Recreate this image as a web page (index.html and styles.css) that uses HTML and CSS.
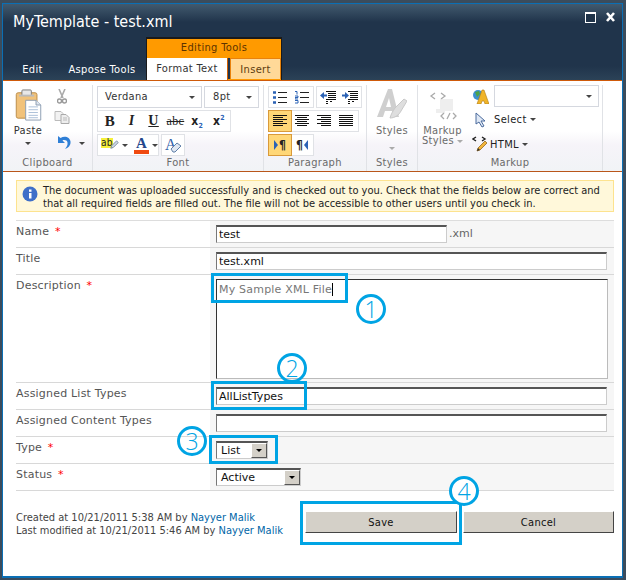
FILE: index.html
```html
<!DOCTYPE html>
<html lang="en">
<head>
    <meta charset="UTF-8">
    <meta name="viewport" content="width=device-width, initial-scale=1.0">
    <title>MyTemplate - test.xml</title>
    <link rel="stylesheet" href="styles.css">
</head>
<body>
    <div class="window">
        <div class="window-inner">
            <div class="titlebar">
                <div class="title-row">
                    <div class="title">MyTemplate - test.xml</div>
                    <div class="win-buttons">
                        <svg width="11" height="11" viewBox="0 0 11 11"><rect x="0.5" y="0.5" width="10" height="10" fill="#1f3349" stroke="#fff"/><rect x="0" y="0" width="11" height="2" fill="#fff"/></svg>
                        <svg width="9" height="10" viewBox="0 0 9 10"><path d="M1 1l7 8M8 1L1 9" stroke="#fff" stroke-width="2.600"/></svg>
                    </div>
                </div>
                <div class="tab-row">
                    <div class="tab tab-edit">Edit</div>
                    <div class="tab tab-aspose">Aspose Tools</div>
                    <div class="tab-group">
                        <div class="tab-group-name">Editing Tools</div>
                        <div class="tab-group-tabs">
                            <div class="tab tab-active">Format Text</div>
                            <div class="tab tab-insert">Insert</div>
                        </div>
                    </div>
                </div>
            </div>

            <div class="ribbon">
                <div class="group group-clipboard">
                    <div class="group-body clipboard-body">
                        <div class="big-btn paste-btn">
                            <svg width="27" height="32" viewBox="0 0 28 34">
                                <rect x="1" y="4" width="22" height="27" rx="2" fill="#f1c27a" stroke="#b98a45"/>
                                <rect x="7" y="1" width="10" height="6" rx="1" fill="#e8e8e8" stroke="#777"/>
                                <rect x="4" y="6" width="16" height="2" fill="#bbb"/>
                                <path d="M11 12h11l5 5v16H11z" fill="#fff" stroke="#8a9bb0"/>
                                <path d="M22 12v5h5" fill="#dfe6ef" stroke="#8a9bb0"/>
                                <path d="M14 19h10M14 22h10M14 25h10M14 28h10M14 30.500h10" stroke="#a8bdd6"/>
                            </svg>
                            <span class="paste-label">Paste</span>
                            <span class="arrow"></span>
                        </div>
                        <div class="clip-small">
                            <svg class="cut-icon" width="10" height="15" viewBox="0 0 10 15"><path d="M2 0l4 9M8 0L4 9" stroke="#aaa" stroke-width="1.600" fill="none"/><circle cx="2.500" cy="12" r="2" fill="none" stroke="#999" stroke-width="1.400"/><circle cx="7.500" cy="12" r="2" fill="none" stroke="#999" stroke-width="1.400"/></svg>
                            <svg class="copy-icon" width="16" height="13" viewBox="0 0 16 13"><path d="M1 .5h6l2 2v7H1z" fill="#f2f2f2" stroke="#bbb"/><path d="M7 3.500h5l3 3v6H7z" fill="#eee" stroke="#aaa"/><path d="M9 7h4M9 9h4" stroke="#bbb"/></svg>
                            <div class="undo-line">
                                <svg width="14" height="14" viewBox="0 0 14 14"><path d="M1 1v7h7L5.500 5.500C7 4.500 10 5 10.500 7.500 11 10 9.500 12 8 14c3-1 6-3.500 5.500-7.500C13 2.500 8 0 3.500 3z" fill="#2f7fd6"/></svg>
                                <span class="arrow undo-arrow"></span>
                            </div>
                        </div>
                    </div>
                    <div class="group-label">Clipboard</div>
                </div>

                <div class="group group-font">
                    <div class="group-body font-body">
                        <div class="row">
                            <div class="combo combo-font">Verdana<span class="arrow"></span></div>
                            <div class="combo combo-size">8pt<span class="arrow"></span></div>
                        </div>
                        <div class="row">
                            <div class="btn-box box-format">
                                <span class="fmt fmt-bold">B</span>
                                <span class="fmt fmt-italic">I</span>
                                <span class="fmt fmt-under">U</span>
                                <span class="fmt fmt-strike">abc</span>
                                <span class="fmt fmt-script">x<sub>2</sub></span>
                                <span class="fmt fmt-script">x<sup>2</sup></span>
                            </div>
                        </div>
                        <div class="row">
                            <div class="btn-box box-color">
                                <span class="hl-icon">
                                    <span class="hl-text">ab</span>
                                    <svg width="11" height="12" viewBox="0 0 11 12"><path d="M1 10l1-3 6-6 2 2-6 6z" fill="#cfd8e6" stroke="#6a7c95"/></svg>
                                </span>
                                <span class="arrow"></span>
                                <span class="color-a">A</span>
                                <span class="arrow"></span>
                            </div>
                            <div class="btn-box box-clear">
                                <span class="clear-a">A</span>
                                <svg class="eraser" width="12" height="12" viewBox="0 0 12 12"><path d="M1 8l6-6 4 3-6 6H3z" fill="#dfe7f2" stroke="#5f7fa8"/></svg>
                            </div>
                        </div>
                    </div>
                    <div class="group-label">Font</div>
                </div>

                <div class="group group-para">
                    <div class="group-body font-body">
                        <div class="row">
                            <div class="btn-box box-para">
                                <span class="pbtn">
                                    <svg width="14" height="13" viewBox="0 0 14 13"><path d="M0 1.500h3M0 6.500h3M0 11.500h3" stroke="#2b62b5" stroke-width="2.400"/><path d="M5 1.500h9M5 6.500h9M5 11.500h9" stroke="#222"/></svg>
                                </span>
                                <span class="pbtn">
                                    <svg width="14" height="13" viewBox="0 0 14 13"><path d="M0 .5h2v3M0 5h3v1.500H0V8h3M0 9.500h3V12H0" stroke="#2b62b5" fill="none"/><path d="M5 1.500h9M5 6.500h9M5 11.500h9" stroke="#222"/></svg>
                                </span>
                            </div>
                            <div class="btn-box box-para">
                                <span class="pbtn">
                                    <svg width="16" height="13" viewBox="0 0 16 13"><path d="M6 .5h10M8 2.500h8M8 4.500h8M8 6.500h8M6 8.500h10" stroke="#111"/><path d="M6 10.500h2M10 10.500h2M6 12.500h2" stroke="#111"/><path d="M0 4.500l4-3.500v2.500h3v2H4V8z" fill="#2b62b5"/></svg>
                                </span>
                                <span class="pbtn">
                                    <svg width="16" height="13" viewBox="0 0 16 13"><path d="M6 .5h10M8 2.500h8M8 4.500h8M8 6.500h8M6 8.500h10" stroke="#111"/><path d="M6 10.500h2M10 10.500h2M6 12.500h2" stroke="#111"/><path d="M7 4.500L3 1v2.500H0v2h3V8z" fill="#2b62b5"/></svg>
                                </span>
                            </div>
                        </div>
                        <div class="row">
                            <div class="btn-box box-align">
                                <span class="pbtn pbtn-on"><svg width="14" height="12" viewBox="0 0 14 12"><path d="M0 .5h14M0 2.500h10M0 4.500h14M0 6.500h10M0 8.500h14M0 10.500h10" stroke="#111"/></svg></span>
                                <span class="pbtn"><svg width="14" height="12" viewBox="0 0 14 12"><path d="M0 .5h14M2 2.500h10M0 4.500h14M2 6.500h10M0 8.500h14M2 10.500h10" stroke="#111"/></svg></span>
                                <span class="pbtn"><svg width="14" height="12" viewBox="0 0 14 12"><path d="M0 .5h14M4 2.500h10M0 4.500h14M4 6.500h10M0 8.500h14M4 10.500h10" stroke="#111"/></svg></span>
                                <span class="pbtn"><svg width="14" height="12" viewBox="0 0 14 12"><path d="M0 .5h14M0 2.500h14M0 4.500h14M0 6.500h14M0 8.500h14M0 10.500h14" stroke="#111"/></svg></span>
                            </div>
                        </div>
                        <div class="row">
                            <div class="btn-box box-dir">
                                <span class="pbtn pbtn-on"><svg width="4" height="10" viewBox="0 0 4 10"><path d="M0 0l4 5-4 5z" fill="#2b62b5"/></svg><span class="pilcrow">¶</span></span>
                                <span class="pbtn"><span class="pilcrow">¶</span><svg width="4" height="10" viewBox="0 0 4 10"><path d="M4 0L0 5l4 5z" fill="#2b62b5"/></svg></span>
                            </div>
                        </div>
                    </div>
                    <div class="group-label">Paragraph</div>
                </div>

                <div class="group group-styles">
                    <div class="group-body big-body">
                        <div class="big-btn">
                            <svg width="30" height="32" viewBox="0 0 30 32">
                                <path d="M0 29h6l2-6h7l1 6h6L15 1h-4zM9 19l3-9 2 9z" fill="#cfcfcf"/>
                                <path d="M13 30c5 0 9-3 11-7l6-10-3-2-9 9c-2 3-4 6-5 10z" fill="#dedede" stroke="#c8c8c8"/>
                            </svg>
                            <span class="faded big-label">Styles</span>
                            <span class="arrow arrow-grey"></span>
                        </div>
                    </div>
                    <div class="group-label">Styles</div>
                </div>

                <div class="group group-markup">
                    <div class="group-body markup-body">
                        <div class="big-btn markup-btn">
                            <svg width="30" height="32" viewBox="0 0 30 32">
                                <path d="M7 4l-4 3 4 3M13 4l4 3-4 3" stroke="#aaa" fill="none" stroke-width="1.300"/>
                                <path d="M12 11h13M12 13h13M12 15h13M12 17h13M12 19h13M8 21h17M8 23h9" stroke="#ddd"/>
                                <path d="M16 24l-3 3 3 3M25 24l3 3-3 3M22 24l-3 6" stroke="#aaa" fill="none" stroke-width="1.300"/>
                            </svg>
                            <span class="faded markup-label">Markup<br>Styles<span class="arrow arrow-grey arrow-inline"></span></span>
                        </div>
                        <div class="markup-list">
                            <div class="markup-row">
                                <svg class="lang-icon" width="17" height="15" viewBox="0 0 17 15">
                                    <circle cx="6" cy="6" r="5" fill="#3c8fd0"/>
                                    <path d="M3 3l4-1 1 3-3 3z" fill="#4da34a"/>
                                    <path d="M10 1h2l5 14h-4l-1-3h-2l-1 3H5z" fill="#f0b429" stroke="#b07a10" stroke-width=".6"/>
                                </svg>
                                <div class="combo combo-lang"><span class="arrow"></span></div>
                            </div>
                            <div class="markup-row">
                                <svg class="select-icon" width="12" height="16" viewBox="0 0 12 16"><path d="M1 1v11l3-2 3 5 2-1-3-5h4z" fill="#dfe8f5" stroke="#4a6a9c"/></svg>
                                Select<span class="arrow arrow-inline"></span>
                            </div>
                            <div class="markup-row">
                                <svg class="html-icon" width="17" height="17" viewBox="0 0 17 17">
                                    <path d="M4 1L1 3l3 2M10 1l3 2-3 2" stroke="#222" fill="none" stroke-width="1.400"/>
                                    <path d="M5 15l1-3 7-7 2 2-7 7z" fill="#f2b53a" stroke="#8a5a10" stroke-width=".7"/>
                                    <path d="M5 15l1-3 2 2z" fill="#333"/>
                                </svg>
                                HTML<span class="arrow arrow-inline"></span>
                            </div>
                        </div>
                    </div>
                    <div class="group-label">Markup</div>
                </div>
            </div>

            <div class="content">
                <div class="message">
                    <svg width="16" height="16" viewBox="0 0 16 16">
                        <circle cx="8" cy="8" r="7.500" fill="#3f6fc8"/>
                        <rect x="7" y="7" width="2.500" height="5.500" fill="#fff"/>
                        <rect x="7" y="3.500" width="2.500" height="2.300" fill="#fff"/>
                    </svg>
                    <p>The document was uploaded successfully and is checked out to you. Check that the fields below are correct and that all required fields are filled out. The file will not be accessible to other users until you check in.</p>
                </div>

                <div class="form">
                    <div class="form-row">
                        <div class="form-label">Name <span class="req">*</span></div>
                        <div class="form-field">
                            <input class="text-input input-name" type="text" value="test" readonly>
                            <span class="suffix">.xml</span>
                        </div>
                    </div>
                    <div class="form-row">
                        <div class="form-label">Title</div>
                        <div class="form-field"><input class="text-input" type="text" value="test.xml" readonly></div>
                    </div>
                    <div class="form-row row-tall">
                        <div class="form-label">Description <span class="req">*</span></div>
                        <div class="form-field">
                            <div class="textarea">My Sample XML File<span class="caret"></span></div>
                        </div>
                    </div>
                    <div class="form-row">
                        <div class="form-label">Assigned List Types</div>
                        <div class="form-field"><input class="text-input" type="text" value="AllListTypes" readonly></div>
                    </div>
                    <div class="form-row">
                        <div class="form-label">Assigned Content Types</div>
                        <div class="form-field"><input class="text-input" type="text" readonly></div>
                    </div>
                    <div class="form-row">
                        <div class="form-label">Type <span class="req">*</span></div>
                        <div class="form-field">
                            <div class="select select-type">List<span class="select-btn"></span></div>
                        </div>
                    </div>
                    <div class="form-row">
                        <div class="form-label">Status <span class="req">*</span></div>
                        <div class="form-field">
                            <div class="select select-status">Active<span class="select-btn"></span></div>
                        </div>
                    </div>
                </div>

                <div class="footer">
                    <div class="footer-info">
                        Created at 10/21/2011 5:38 AM by <a href="#">Nayyer Malik</a><br>
                        Last modified at 10/21/2011 5:46 AM by <a href="#">Nayyer Malik</a>
                    </div>
                    <div class="footer-buttons">
                        <button class="action-btn">Save</button>
                        <button class="action-btn">Cancel</button>
                    </div>
                </div>
            </div>
        </div>

        <!-- callouts drawn over the screenshot -->
        <div class="mark mark-1"></div>
        <div class="mark mark-2"></div>
        <div class="mark mark-3"></div>
        <div class="mark mark-4"></div>
        <div class="num num-1">1</div>
        <div class="num num-2">2</div>
        <div class="num num-3">3</div>
        <div class="num num-4">4</div>
    </div>
</body>
</html>
```

FILE: styles.css
```css
* {
    box-sizing: border-box;
}

html, body {
    margin: 0;
    padding: 0;
    background: #fff;
}

body {
    font-family: "DejaVu Sans Condensed", "DejaVu Sans", sans-serif;
    font-size: 11px;
    color: #333;
}

.window {
    position: relative;
    width: 626px;
    height: 580px;
    padding: 3px 3px 2px 2px;
    background: #3b4c5c;
    overflow: hidden;
}

.window-inner {
    height: 100%;
    border: 1px solid #0b6fb5;
    border-bottom-width: 2px;
    display: flex;
    flex-direction: column;
}

/* title bar */
.titlebar {
    height: 76px;
    flex: none;
    background: linear-gradient(#425a6e 0, #20344b 18px, #20344b 62px, #2b4257 76px);
    display: flex;
    flex-direction: column;
}

.title-row {
    height: 33px;
    display: flex;
    justify-content: space-between;
    padding: 8px 7px 0 10px;
}

.title {
    font-size: 16px;
    line-height: 20px;
    color: #fff;
}

.win-buttons {
    display: flex;
    gap: 10px;
    align-items: flex-start;
    padding-top: 0;
}

.tab-row {
    flex: 1;
    display: flex;
    align-items: flex-end;
}

.tab {
    height: 21px;
    line-height: 21px;
    color: #fff;
    text-align: center;
    letter-spacing: .35px;
}

.tab-edit {
    width: 55px;
    padding-left: 4px;
}

.tab-aspose {
    width: 88px;
}

.tab-group {
    width: 136px;
    height: 43px;
    border: 1px solid #1a1a1a;
    border-bottom: 0;
    border-top-width: 2px;
    background: #ff9a00;
    display: flex;
    flex-direction: column;
    position: relative;
    z-index: 1;
}

.tab-group-name {
    height: 19px;
    line-height: 18px;
    text-align: center;
    color: #5c3300;
    letter-spacing: .35px;
}

.tab-group-tabs {
    height: 21px;
    display: flex;
    background: #20344b;
    gap: 2px;
}

.tab-active {
    width: 81px;
    height: 22px;
    flex: none;
    background: #fff;
    color: #333;
    border-right: 1px solid #d35f00;
}

.tab-insert {
    width: 51px;
    background: #ffd998;
    color: #5c3c10;
    border: 1px solid #e8820c;
    border-bottom: 0;
}

/* ribbon */
.ribbon {
    height: 92px;
    flex: none;
    display: flex;
    letter-spacing: .35px;
    border-top: 1px solid #cf5a0a;
    border-bottom: 1px solid #b9561b;
    background: linear-gradient(#fff 0, #fff 50px, #f6f4f9 64px, #f1f3f6 90px);
}

.group {
    display: flex;
    flex-direction: column;
    border-right: 1px solid #e0e2e6;
    margin-top: 4px;
}

.group-clipboard { width: 90px; }
.group-font { width: 171px; }
.group-para { width: 103px; }
.group-styles { width: 51px; }
.group-markup { width: 185px; }

.group-body {
    flex: 1;
    min-height: 0;
}

.group-label {
    height: 16px;
    line-height: 15px;
    flex: none;
    text-align: center;
    color: #6a6a6a;
}

.clipboard-body {
    display: flex;
    padding: 4px 0 0 8px;
}

.big-btn {
    display: flex;
    flex-direction: column;
    align-items: center;
    color: #333;
}

.paste-btn {
    width: 34px;
}

.paste-label {
    margin-top: 3px;
    line-height: 14px;
}

.arrow {
    display: inline-block;
    width: 0;
    height: 0;
    border: 3px solid transparent;
    border-top: 3px solid #444;
    border-bottom: 0;
}

.arrow-grey {
    border-top-color: #aaa;
}

.arrow-inline {
    margin-left: 3px;
    vertical-align: middle;
}

.paste-btn .arrow {
    margin-top: 4px;
}

.clip-small {
    margin-left: 12px;
    display: flex;
    flex-direction: column;
    align-items: flex-start;
    gap: 7px;
}

.copy-icon {
    margin-left: -3px;
}

.undo-line {
    display: flex;
    align-items: center;
    gap: 8px;
    margin-top: 4px;
}

.undo-arrow {
    margin-top: 2px;
}

.font-body {
    padding-left: 4px;
    display: flex;
    flex-direction: column;
    gap: 2px;
    padding-top: 1px;
}

.row {
    display: flex;
    gap: 2px;
    height: 22px;
    flex: none;
}

.combo {
    height: 22px;
    line-height: 20px;
    border: 1px solid #d5d8df;
    background: #fff;
    padding-left: 7px;
    color: #333;
    position: relative;
}

.combo .arrow {
    position: absolute;
    right: 6px;
    top: 9px;
}

.combo-font { width: 105px; }
.combo-size { width: 55px; padding-left: 8px; }
.combo-lang { width: 105px; }

.btn-box {
    display: flex;
    align-items: center;
    height: 22px;
    border: 1px solid #e0e2e6;
    background: #fff;
}

.box-format {
    width: 134px;
    padding-left: 1px;
}

.fmt {
    width: 22px;
    text-align: center;
    color: #222;
    font-weight: bold;
    font-size: 12px;
    line-height: 20px;
}

.fmt-bold {
    font-family: "Liberation Serif", serif;
    font-size: 15px;
}

.fmt-italic {
    font-family: "Liberation Serif", serif;
    font-style: italic;
    font-size: 14px;
}

.fmt-under {
    font-family: "Liberation Serif", serif;
    text-decoration: underline;
    font-size: 14px;
}

.fmt-strike {
    font-family: "Liberation Serif", serif;
    text-decoration: line-through;
    font-weight: normal;
    font-size: 12px;
}

.fmt-script sub,
.fmt-script sup {
    font-size: 7px;
    color: #2b62b5;
    line-height: 0;
}

.box-color {
    width: 62px;
    padding-left: 3px;
    gap: 3px;
}

.hl-icon {
    display: flex;
    align-items: center;
    width: 18px;
    position: relative;
}

.hl-text {
    background: #f5f03a;
    color: #222;
    line-height: 10px;
    font-size: 10px;
    margin-top: -4px;
}

.hl-icon svg {
    margin-left: -3px;
}

.color-a {
    width: 16px;
    margin-left: 3px;
    text-align: center;
    font: bold 15px/12px "Liberation Serif", serif;
    color: #23478c;
    border-bottom: 4px solid #f04a10;
    height: 17px;
}

.box-clear {
    width: 24px;
    position: relative;
    padding-left: 3px;
}

.clear-a {
    font: 16px/18px "Liberation Serif", serif;
    color: #2f5ea8;
}

.eraser {
    position: absolute;
    right: 2px;
    bottom: 2px;
}

.box-para {
    width: 46px;
    justify-content: space-around;
}

.box-align {
    width: 91px;
}

.box-dir {
    width: 46px;
}

.pbtn {
    width: 22px;
    height: 20px;
    flex: none;
    display: flex;
    align-items: center;
    justify-content: center;
    gap: 1px;
}

.box-para .pbtn {
    width: 20px;
}

.pbtn-on {
    background: #ffd777;
    outline: 1px solid #d99a3a;
}

.pilcrow {
    font-size: 12px;
    font-weight: bold;
    color: #222;
    line-height: 16px;
}

.big-body {
    display: flex;
    justify-content: center;
    padding-top: 3px;
}

.faded {
    color: #6a6a6a;
}

.big-label {
    margin-top: 4px;
    line-height: 14px;
}

.big-body .arrow {
    margin-top: 9px;
}

.markup-body {
    display: flex;
    padding-left: 2px;
}

.markup-btn {
    width: 46px;
    padding-top: 4px;
}

.markup-label {
    line-height: 10px;
    text-align: center;
    margin-top: 5px;
}

.markup-list {
    margin-left: 7px;
    display: flex;
    flex-direction: column;
    gap: 2px;
    color: #222;
}

.markup-row {
    display: flex;
    align-items: center;
    height: 22px;
    width: 130px;
}

.lang-icon {
    margin-right: 5px;
    flex: none;
}

.select-icon {
    margin: 0 7px 0 3px;
}

.html-icon {
    margin-right: 1px;
    flex: none;
}

.markup-row:nth-child(3) {
    margin-top: 2px;
}

/* page content */
.content {
    flex: 1;
    background: #fff;
    padding: 8px 8px 0 13px;
    min-height: 0;
}

.message {
    height: 32px;
    background: #fff8da;
    border: 1px solid #fde38f;
    display: flex;
    gap: 5px;
    padding: 4px 0 0 5px;
    color: #222;
}

.message svg {
    flex: none;
    margin-top: 1px;
}

.message p {
    margin: -1px 0 0;
    width: 570px;
    line-height: 13px;
}

.form {
    margin-top: 8px;
    border-top: 1px solid #ddd;
    font-family: "DejaVu Sans", sans-serif;
}

.form-row {
    display: flex;
    height: 27px;
    border-bottom: 1px solid #d8d8d8;
}

.row-tall {
    height: 108px;
}

.form-label {
    width: 194px;
    padding-top: 4px;
    color: #555;
    line-height: 14px;
    flex: none;
    letter-spacing: .2px;
}

.req {
    color: #f00;
    margin-left: 2px;
}

.form-field {
    flex: 1;
    background: #f6f6f6;
    padding: 4px 0 0 6px;
    display: flex;
    align-items: flex-start;
}

.text-input {
    width: 391px;
    height: 18px;
    border: 1px solid #ccc;
    border-top: 2px solid #555;
    border-left: 1px solid #777;
    background: #fff;
    padding: 0 2px;
    margin: 0;
    font: 11px/14px "DejaVu Sans", sans-serif;
    color: #111;
    outline: 0;
}

.input-name {
    width: 231px;
}

.suffix {
    margin-left: 2px;
    line-height: 18px;
    color: #666;
}

.textarea {
    width: 392px;
    height: 100px;
    border: 1px solid #bbb;
    border-top-color: #333;
    border-left-color: #333;
    background: #fff;
    padding: 3px 2px;
    line-height: 13px;
    color: #777;
    letter-spacing: .2px;
}

.caret {
    display: inline-block;
    width: 1px;
    height: 13px;
    background: #000;
    vertical-align: -3px;
}

.select {
    height: 18px;
    line-height: 15px;
    border: 1px solid #ccc;
    border-top: 2px solid #555;
    border-left: 1px solid #777;
    background: #fff;
    padding: 0 4px;
    color: #111;
    position: relative;
}

.select-type { width: 52px; }
.select-status { width: 85px; }

.select-btn {
    position: absolute;
    right: 0;
    top: 0;
    width: 16px;
    height: 15px;
    background: #d4d0c8;
    border: 1px solid;
    border-color: #fff #555 #555 #fff;
}

.select-btn::after {
    content: "";
    position: absolute;
    left: 4px;
    top: 5px;
    border: 3px solid transparent;
    border-top: 3px solid #000;
    border-bottom: 0;
}

.footer {
    display: flex;
    justify-content: space-between;
    padding-top: 20px;
}

.footer-info {
    line-height: 13px;
    color: #444;
}

.footer-info a {
    color: #0066a8;
    text-decoration: none;
}

.footer-buttons {
    display: flex;
    gap: 6px;
}

.action-btn {
    width: 152px;
    height: 22px;
    background: #d4d0c8;
    border: 1px solid;
    border-color: #fff #444 #444 #fff;
    font: 11px "DejaVu Sans Condensed", "DejaVu Sans", sans-serif;
    letter-spacing: .3px;
    color: #111;
    padding: 0;
}

.action-btn + .action-btn {
    width: 151px;
}

/* callouts */
.mark {
    position: absolute;
    border: 3px solid #00a4e4;
}

.mark-1 { left: 211px; top: 273px; width: 137px; height: 30px; }
.mark-2 { left: 211px; top: 381px; width: 96px; height: 29px; }
.mark-3 { left: 209px; top: 435px; width: 69px; height: 29px; }
.mark-4 { left: 300px; top: 501px; width: 162px; height: 44px; }

.num {
    position: absolute;
    width: 30px;
    height: 30px;
    border: 3px solid #00a4e4;
    border-radius: 50%;
    background: #fff;
    color: #00a4e4;
    font: 300 23px/24px "Open Sans", sans-serif;
    text-align: center;
}

.num-1 { left: 356px; top: 294px; }
.num-2 { left: 277px; top: 353px; background: transparent; }
.num-3 { left: 177px; top: 426px; background: transparent; }
.num-4 { left: 449px; top: 476px; }
```
